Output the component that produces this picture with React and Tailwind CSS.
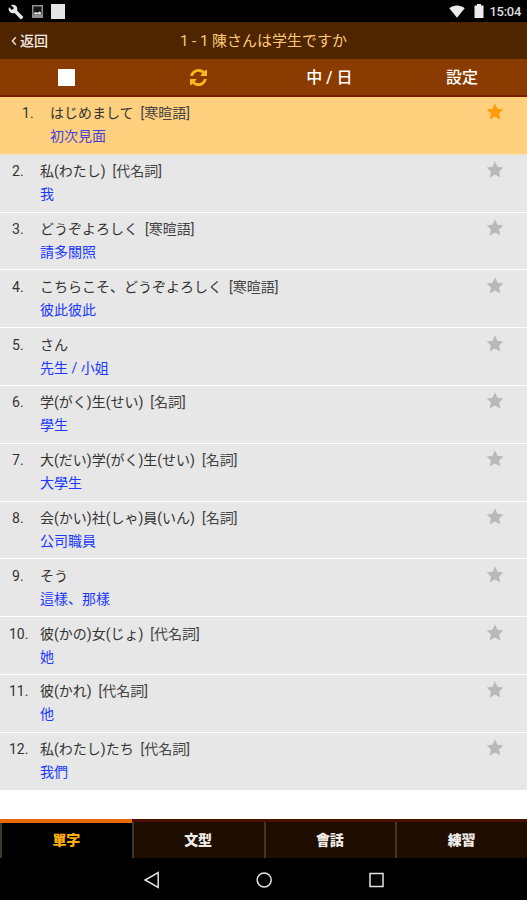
import { useState } from "react";
import { MdBuild } from "react-icons/md";

const words = [
  { id: 1, text: "はじめまして", type: "寒暄語", meaning: "初次見面" },
  { id: 2, text: "私(わたし)", type: "代名詞", meaning: "我" },
  { id: 3, text: "どうぞよろしく", type: "寒暄語", meaning: "請多關照" },
  { id: 4, text: "こちらこそ、どうぞよろしく", type: "寒暄語", meaning: "彼此彼此" },
  { id: 5, text: "さん", type: "", meaning: "先生 / 小姐" },
  { id: 6, text: "学(がく)生(せい)", type: "名詞", meaning: "學生" },
  { id: 7, text: "大(だい)学(がく)生(せい)", type: "名詞", meaning: "大學生" },
  { id: 8, text: "会(かい)社(しゃ)員(いん)", type: "名詞", meaning: "公司職員" },
  { id: 9, text: "そう", type: "", meaning: "這樣、那樣" },
  { id: 10, text: "彼(かの)女(じょ)", type: "代名詞", meaning: "她" },
  { id: 11, text: "彼(かれ)", type: "代名詞", meaning: "他" },
  { id: 12, text: "私(わたし)たち", type: "代名詞", meaning: "我們" },
];

const tabs = ["單字", "文型", "會話", "練習"];

const StarIcon = ({ className }) => (
  <svg className={className} viewBox="0 0 18 17" fill="currentColor">
    <path d="M9 0.3L11.5 5.7L17.4 6.4L13.1 10.4L14.3 16.4L9 13.5L3.7 16.4L4.9 10.4L0.6 6.4L6.5 5.7Z" />
  </svg>
);

const RefreshIcon = ({ className }) => (
  <svg className={className} viewBox="0 128 1536 1536" fill="currentColor">
    <path d="M1511 1056q0 5-1 7-64 268-268 434.5t-478 166.5q-146 0-282.5-55t-243.5-157l-129 129q-19 19-45 19t-45-19-19-45v-448q0-26 19-45t45-19h448q26 0 45 19t19 45-19 45l-137 137q71 66 161 102t187 36q134 0 250-65t186-179q11-17 53-117 8-23 30-23h192q13 0 22.5 9.5t9.5 22.5zm25-800v448q0 26-19 45t-45 19h-448q-26 0-45-19t-19-45 19-45l138-138q-148-137-349-137-134 0-250 65t-186 179q-11 17-53 117-8 23-30 23h-199q-13 0-22.5-9.5t-9.5-22.5v-7q65-268 270-434.5t480-166.5q146 0 284 55.5t245 156.5l130-129q19-19 45-19t45 19 19 45z" />
  </svg>
);

const StatusBar = () => (
  <div className="h-[22px] shrink-0 bg-black flex items-center justify-between pl-[8px] pr-[6px]">
    <div className="flex items-center pt-px">
      <MdBuild className="w-[16px] h-[16px] text-[#e8e8e8]" />
      <svg className="w-[11px] h-[13px] ml-[8px]" viewBox="0 0 11 13">
        <rect x="0.75" y="0.75" width="9.5" height="11.5" fill="#151515" stroke="#8f8f8f" strokeWidth="1.5" />
        <path d="M2 9.5V7.8L4 7L5.5 7.8L7.5 6.6L9 7.6V9.5Z" fill="#e0e0e0" />
        <rect x="1" y="9.5" width="9" height="2.5" fill="#8f8f8f" />
      </svg>
      <div className="w-[14px] h-[15px] ml-[8px] bg-[#e6e6e6]" />
    </div>
    <div className="flex items-center">
      <svg className="w-[16px] h-[13px]" viewBox="0 0 16 13">
        <path d="M0.3 3.2C4.8 -0.4 11.2 -0.4 15.7 3.2L8 12.8Z" fill="#ececec" />
      </svg>
      <svg className="w-[10px] h-[14px] ml-[9px]" viewBox="0 0 10 14">
        <path d="M3 0H7V1.5H9.5V14H0.5V1.5H3Z" fill="#ececec" />
      </svg>
      <span className="ml-[6px] text-[13px] leading-none font-medium text-[#dedede] tracking-[-0.3px] pt-[1px]">15:04</span>
    </div>
  </div>
);

const Header = () => (
  <div className="h-[37px] shrink-0 bg-[#4f2500] grid grid-cols-[1fr_auto_1fr] items-center">
    <button className="flex items-center pl-[11px] text-[14px] leading-none text-[#f3e9e3] font-medium">
      <svg className="w-[6px] h-[10px] mr-[3px]" viewBox="0 0 6 10">
        <path d="M4.8 1.2L1.4 5L4.8 8.8" fill="none" stroke="#e9dcd4" strokeWidth="1.5" />
      </svg>
      返回
    </button>
    <h1 className="pt-[2px] text-[15px] leading-none text-[#fcca78] whitespace-pre">1 - 1 陳さんは学生ですか</h1>
    <span />
  </div>
);

const Toolbar = () => (
  <div className="h-[38px] shrink-0 bg-[#8a3c00] border-b-2 border-[#7c1b00] grid grid-cols-4 text-white text-[16px] leading-none font-medium">
    <button className="flex items-center justify-center pl-[2px]">
      <span className="w-[17px] h-[17px] bg-white" />
    </button>
    <button className="flex items-center justify-center pl-[2px]">
      <RefreshIcon className="w-[17px] h-[17px] text-[#ffb81c]" />
    </button>
    <button className="flex items-center justify-center pt-[2px]">中 / 日</button>
    <button className="flex items-center justify-center pt-[2px] pl-[2px]">設定</button>
  </div>
);

const WordRow = ({ word, selected, onSelect }) => (
  <li
    onClick={() => onSelect(word.id)}
    className={`h-[57.8px] flex border-b pt-[6.4px] text-[14px] ${
      selected ? "bg-[#ffd07e] border-[#f5e4c4] pl-[10px]" : "bg-[#e7e7e7] border-white"
    }`}
  >
    <span className={`w-[30px] leading-[20px] text-[#333] ${word.id > 9 ? "pl-[9px]" : "pl-[12px]"}`}>
      {word.id}.
    </span>
    <div className="flex-1 pl-[10px]">
      <p className="leading-[20px] text-[#333] whitespace-pre">
        {word.text}
        {word.type && <span className="text-[#444]">{`  [${word.type}]`}</span>}
      </p>
      <p className={`mt-[3px] leading-[20px] ${selected ? "text-[#4444d8]" : "text-[#2038ff]"}`}>
        {word.meaning}
      </p>
    </div>
    <StarIcon
      className={`w-[18px] h-[17px] mr-[23px] ${selected ? "text-[#ff9c0c]" : "text-[#b9b9b9]"}`}
    />
  </li>
);

const TabBar = ({ active, onChange }) => (
  <div className="h-[39px] shrink-0 grid grid-cols-4 bg-[#1f0d00]">
    {tabs.map((tab, i) => (
      <button
        key={tab}
        onClick={() => onChange(i)}
        className={`flex flex-col text-[14px] leading-none font-black ${
          active === i ? "bg-black text-[#ffac10]" : "bg-[#1f0d00] text-[#eeeae6]"
        }`}
      >
        <span className={`w-full shrink-0 ${active === i ? "h-[4px] bg-[#e8690d]" : "h-[3px] bg-[#4a1000]"}`} />
        <span
          className={`w-full flex-1 flex items-center justify-center border-l-2 border-[#42362c] pr-[1px] ${
            active === i ? "pb-[1px]" : ""
          }`}
        >
          {tab}
        </span>
      </button>
    ))}
  </div>
);

const NavBar = () => (
  <div className="h-[42px] shrink-0 bg-black flex items-center justify-center pt-px">
    <svg className="w-[240px] h-[18px]" viewBox="0 0 240 18" fill="none" stroke="#e2e2e2" strokeWidth="1.5">
      <path d="M14.2 1.6V16.4L1.1 9Z" />
      <circle cx="120.2" cy="9" r="7" />
      <rect x="226" y="2.5" width="13" height="13" />
    </svg>
  </div>
);

const App = () => {
  const [selectedId, setSelectedId] = useState(1);
  const [activeTab, setActiveTab] = useState(0);

  return (
    <div className="w-full h-screen flex flex-col overflow-hidden bg-white font-[Roboto,'Noto_Sans_CJK_JP','Noto_Sans_CJK_TC',sans-serif]">
      <StatusBar />
      <Header />
      <Toolbar />

      {/* Word list */}
      <ul className="flex-1 min-h-0 overflow-hidden">
        {words.map((word) => (
          <WordRow
            key={word.id}
            word={word}
            selected={word.id === selectedId}
            onSelect={setSelectedId}
          />
        ))}
      </ul>

      <TabBar active={activeTab} onChange={setActiveTab} />
      <NavBar />
    </div>
  );
};

export default App;
